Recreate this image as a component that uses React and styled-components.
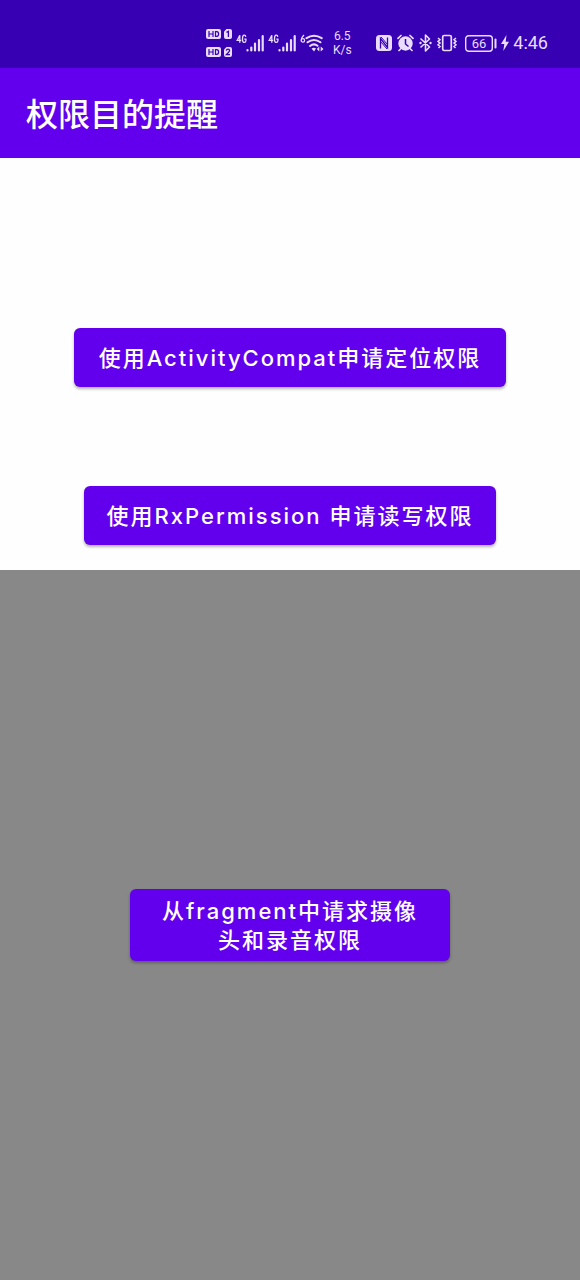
import React from "react";
import styled, { createGlobalStyle } from "styled-components";

const uiFont = `"Inter", "Noto Sans CJK SC", sans-serif`;

const GlobalStyle = createGlobalStyle`
  *, *::before, *::after { box-sizing: border-box; }
  html, body, #root { height: 100%; }
  body { margin: 0; background: #fefefe; font-family: ${uiFont}; }
`;

const Screen = styled.div`
  min-height: 100%;
  display: flex;
  flex-direction: column;
`;

const StatusBar = styled.div`
  display: flex;
  justify-content: flex-end;
  align-items: center;
  height: 68px;
  padding: 18px 32px 0 0;
  background: #3700b3;
  color: #eadcff;

  svg { display: block; flex: none; }
`;

const Group = styled.div`
  display: flex;
  align-items: center;
  gap: ${(p) => p.$gap || 0}px;
  margin-right: ${(p) => p.$after || 0}px;
`;

const Speed = styled.div`
  width: 20px;
  margin-right: 24px;
  font: 400 12px/14px "Roboto", sans-serif;
  text-align: center;
`;

const Clock = styled.time`
  font: 400 18px/20px "Roboto", sans-serif;
`;

const AppBar = styled.header`
  display: flex;
  align-items: center;
  height: 90px;
  padding: 4px 26px 0;
  background: #6200ee;
`;

const Title = styled.h1`
  margin: 0;
  color: #fff;
  font-size: 32px;
  line-height: 40px;
  font-weight: 500;
`;

const Actions = styled.main`
  display: flex;
  flex-direction: column;
  align-items: center;
  gap: 99px;
  padding: 170px 26px 25px;
`;

const Fragment = styled.section`
  flex: 1;
  display: flex;
  align-items: center;
  justify-content: center;
  padding: 26px;
  background: #888888;
`;

const Button = styled.button`
  width: ${(p) => p.$width}px;
  max-width: 100%;
  min-height: 59px;
  padding: ${(p) => (p.$multiline ? "8px 26px 6px" : "2px 0 0")};
  border: 0;
  border-radius: 6px;
  background: #6200ee;
  color: #fff;
  font-family: ${uiFont};
  font-size: 22px;
  line-height: 29px;
  font-weight: 500;
  letter-spacing: 2px;
  text-align: center;
  box-shadow: 0 2px 3px rgba(0, 0, 0, 0.3);
`;

function SimBadges() {
  const row = (y, n) => (
    <g transform={`translate(0 ${y})`} key={n}>
      <rect width="15" height="10" rx="2" fill="currentColor" />
      <path d="M3 2v6M7 2v6M3 5h4M9.500 2.600v4.800h1.200q1.900 0 1.900-2.400t-1.900-2.400z" fill="none" stroke="#3700b3" strokeWidth="1.200" />
      <path d="M20.500 0H24q2 0 2 2v6q0 2-2 2h-4q-2 0-2-2V2.500z" fill="currentColor" />
      <path d={n === 1 ? "M20.500 3.400 22.400 2.400V8" : "M20.300 3.600q.2-1.400 1.700-1.400t1.600 1.400Q23.600 4.800 20.500 7.600H24"} fill="none" stroke="#3700b3" strokeWidth="1.300" />
    </g>
  );
  return (
    <svg width="26" height="28" viewBox="0 0 26 28" role="img" aria-label="HD 1, HD 2">
      {row(0, 1)}
      {row(18, 2)}
    </svg>
  );
}

function Signal() {
  return (
    <svg width="28" height="18" viewBox="0 0 28 18" role="img" aria-label="4G">
      <path d="M3.800 8.800V1.200L1.200 6.400H5.300M9.800 2.800Q9.600 1.200 8.200 1.200 6.500 1.200 6.500 4.900T8.200 8.300Q9.900 8.300 9.900 6.700V5.200H8.300" fill="none" stroke="currentColor" strokeWidth="1.300" />
      <path d="M11.500 16.200v.2M15.300 13.500v3M19 9.500v7M23 6v10.500M26.700 2v14.500" stroke="currentColor" strokeWidth="2.200" strokeLinecap="round" />
    </svg>
  );
}

function Wifi() {
  return (
    <svg width="24" height="18" viewBox="0 0 24 18" role="img" aria-label="Wi-Fi 6">
      <path d="M4 1Q1.300 3.400 1.200 6.200" fill="none" stroke="currentColor" strokeWidth="1.300" />
      <circle cx="2.900" cy="6.400" r="1.700" fill="none" stroke="currentColor" strokeWidth="1.300" />
      <g fill="none" stroke="currentColor" strokeWidth="2" strokeLinecap="round">
        <path d="M6.500 4.200Q14 -.9 21.700 4.200" />
        <path d="M7.500 8.300Q14 3.500 20.500 8.300" />
        <path d="M10 12Q14 8.800 17.500 11.800" />
      </g>
      <path d="M14 17.500 11.500 14.500Q14 12.800 16 14.500zM19.300 12.500v5L16.800 15zM20.700 12.500v5L23.500 15z" fill="currentColor" />
    </svg>
  );
}

function Nfc() {
  return (
    <svg width="16" height="16" viewBox="0 0 16 16" role="img" aria-label="NFC">
      <rect width="16" height="16" rx="3.500" fill="currentColor" />
      <path d="M4.500 13.500V3.500L11.500 12.500V2.500" fill="none" stroke="#3700b3" strokeWidth="1.300" />
      <path d="M5 2 11.500 9.500M4.500 6.500 11 14" fill="none" stroke="#3700b3" strokeWidth="1" />
    </svg>
  );
}

function Alarm() {
  return (
    <svg width="17" height="18" viewBox="0 0 17 18" role="img" aria-label="Alarm">
      <circle cx="8.500" cy="9.500" r="7.200" fill="currentColor" />
      <path d="M1 4.300 4 1.500M16 4.300 13 1.500M3.500 15 2 16.500M13.500 15 15 16.500" stroke="currentColor" strokeWidth="1.700" strokeLinecap="round" />
      <path d="M8.500 5v5l3 2.500" fill="none" stroke="#3700b3" strokeWidth="1.500" />
    </svg>
  );
}

function Bluetooth() {
  return (
    <svg width="13" height="18" viewBox="0 0 13 18" role="img" aria-label="Bluetooth">
      <path d="M1.500 4.500 10.500 13 6.500 17V1L10.500 5 1.500 13.500" fill="none" stroke="currentColor" strokeWidth="1.600" strokeLinejoin="round" />
      <circle cx="1.500" cy="9" r="1.200" fill="currentColor" />
      <circle cx="11.500" cy="9" r="1.200" fill="currentColor" />
    </svg>
  );
}

function Vibrate() {
  return (
    <svg width="20" height="18" viewBox="0 0 20 18" role="img" aria-label="Vibrate">
      <rect x="5.700" y="1.500" width="8.600" height="15" rx="1.500" fill="none" stroke="currentColor" strokeWidth="1.700" />
      <path d="M1 4l2 1.700-2 1.700 2 1.700-2 1.700 2 1.700-1.500 1.500M19 4l-2 1.700 2 1.700-2 1.700 2 1.700-2 1.700 1.500 1.500" fill="none" stroke="currentColor" strokeWidth="1.500" />
    </svg>
  );
}

function Battery() {
  return (
    <svg width="32" height="17" viewBox="0 0 32 17" role="img" aria-label="Battery 66%">
      <rect x=".7" y=".7" width="26.600" height="15.600" rx="3" fill="none" stroke="currentColor" strokeWidth="1.400" />
      <path d="M30.500 4.500v8" stroke="currentColor" strokeWidth="2" strokeLinecap="round" />
      <text x="14" y="13" textAnchor="middle" fontSize="13" fontFamily="Roboto, sans-serif" fill="currentColor">66</text>
    </svg>
  );
}

function Bolt() {
  return (
    <svg width="8" height="16" viewBox="0 0 8 16" role="img" aria-label="Charging">
      <path d="M5.500 0 0 9h3.300L2.300 16 8 6.700H4.700z" fill="currentColor" />
    </svg>
  );
}

export default function App() {
  return (
    <Screen>
      <GlobalStyle />
      <StatusBar>
        <Group $gap={4} $after={8}>
          <SimBadges />
          <Signal />
          <Signal />
          <Wifi />
        </Group>
        <Speed>6.5 K/s</Speed>
        <Group $gap={5} $after={8}>
          <Nfc />
          <Alarm />
          <Bluetooth />
          <Vibrate />
        </Group>
        <Group $gap={4} $after={4}>
          <Battery />
          <Bolt />
        </Group>
        <Clock>4:46</Clock>
      </StatusBar>
      <AppBar>
        <Title>权限目的提醒</Title>
      </AppBar>
      <Actions>
        <Button type="button" $width={432}>使用ActivityCompat申请定位权限</Button>
        <Button type="button" $width={412}>使用RxPermission 申请读写权限</Button>
      </Actions>
      <Fragment>
        <Button type="button" $width={320} $multiline>从fragment中请求摄像头和录音权限</Button>
      </Fragment>
    </Screen>
  );
}
